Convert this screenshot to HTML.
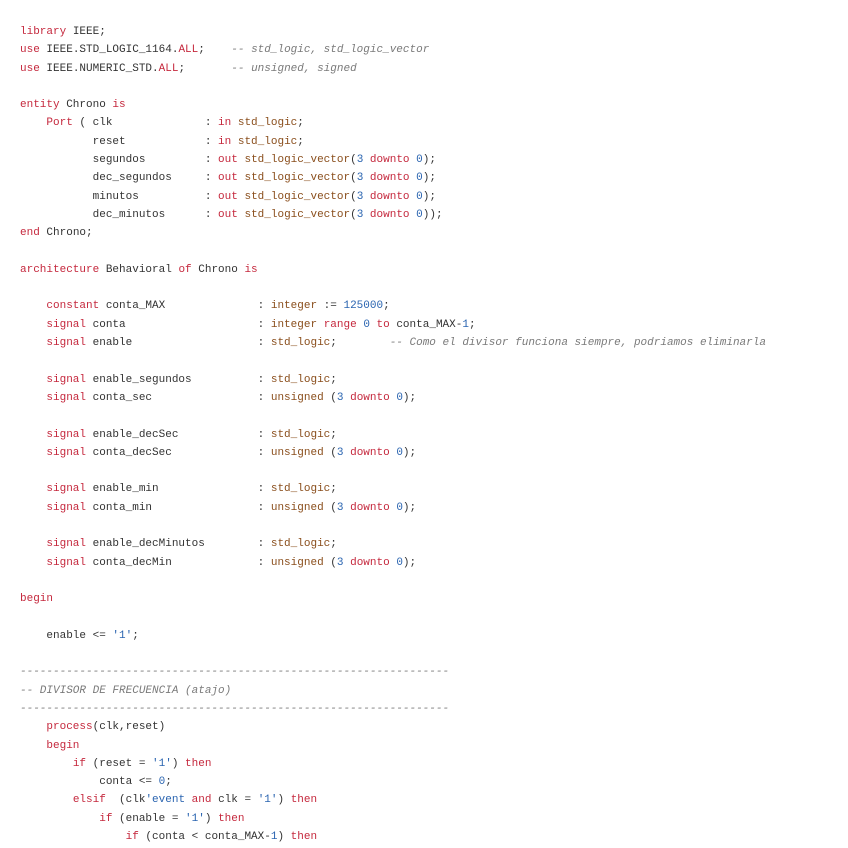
<!DOCTYPE html>
<html><head><meta charset="utf-8"><style>
html,body{margin:0;background:#fff;}
pre{margin:0;padding:23px 0 0 20px;font-family:"Liberation Mono",monospace;font-size:11px;line-height:18.3px;color:#333;}
.k{color:#c5283d}.t{color:#8a4e1c}.n{color:#2a64b0}.c{color:#7a7a7a;font-style:italic}
</style></head><body><pre><span class="k">library</span> IEEE;
<span class="k">use</span> IEEE.STD_LOGIC_1164.<span class="k">ALL</span>;    <span class="c">-- std_logic, std_logic_vector</span>
<span class="k">use</span> IEEE.NUMERIC_STD.<span class="k">ALL</span>;       <span class="c">-- unsigned, signed</span>

<span class="k">entity</span> Chrono <span class="k">is</span>
    <span class="k">Port</span> ( clk              : <span class="k">in</span> <span class="t">std_logic</span>;
           reset            : <span class="k">in</span> <span class="t">std_logic</span>;
           segundos         : <span class="k">out</span> <span class="t">std_logic_vector</span>(<span class="n">3</span> <span class="k">downto</span> <span class="n">0</span>);
           dec_segundos     : <span class="k">out</span> <span class="t">std_logic_vector</span>(<span class="n">3</span> <span class="k">downto</span> <span class="n">0</span>);
           minutos          : <span class="k">out</span> <span class="t">std_logic_vector</span>(<span class="n">3</span> <span class="k">downto</span> <span class="n">0</span>);
           dec_minutos      : <span class="k">out</span> <span class="t">std_logic_vector</span>(<span class="n">3</span> <span class="k">downto</span> <span class="n">0</span>));
<span class="k">end</span> Chrono;

<span class="k">architecture</span> Behavioral <span class="k">of</span> Chrono <span class="k">is</span>

    <span class="k">constant</span> conta_MAX              : <span class="t">integer</span> := <span class="n">125000</span>;
    <span class="k">signal</span> conta                    : <span class="t">integer</span> <span class="k">range</span> <span class="n">0</span> <span class="k">to</span> conta_MAX-<span class="n">1</span>;
    <span class="k">signal</span> enable                   : <span class="t">std_logic</span>;        <span class="c">-- Como el divisor funciona siempre, podriamos eliminarla</span>

    <span class="k">signal</span> enable_segundos          : <span class="t">std_logic</span>;
    <span class="k">signal</span> conta_sec                : <span class="t">unsigned</span> (<span class="n">3</span> <span class="k">downto</span> <span class="n">0</span>);

    <span class="k">signal</span> enable_decSec            : <span class="t">std_logic</span>;
    <span class="k">signal</span> conta_decSec             : <span class="t">unsigned</span> (<span class="n">3</span> <span class="k">downto</span> <span class="n">0</span>);

    <span class="k">signal</span> enable_min               : <span class="t">std_logic</span>;
    <span class="k">signal</span> conta_min                : <span class="t">unsigned</span> (<span class="n">3</span> <span class="k">downto</span> <span class="n">0</span>);

    <span class="k">signal</span> enable_decMinutos        : <span class="t">std_logic</span>;
    <span class="k">signal</span> conta_decMin             : <span class="t">unsigned</span> (<span class="n">3</span> <span class="k">downto</span> <span class="n">0</span>);

<span class="k">begin</span>

    enable &lt;= <span class="n">'1'</span>;

<span class="c">-----------------------------------------------------------------</span>
<span class="c">-- DIVISOR DE FRECUENCIA (atajo)</span>
<span class="c">-----------------------------------------------------------------</span>
    <span class="k">process</span>(clk,reset)
    <span class="k">begin</span>
        <span class="k">if</span> (reset = <span class="n">'1'</span>) <span class="k">then</span>
            conta &lt;= <span class="n">0</span>;
        <span class="k">elsif</span>  (clk<span class="n">'event</span> <span class="k">and</span> clk = <span class="n">'1'</span>) <span class="k">then</span>
            <span class="k">if</span> (enable = <span class="n">'1'</span>) <span class="k">then</span>
                <span class="k">if</span> (conta &lt; conta_MAX-<span class="n">1</span>) <span class="k">then</span>
</pre></body></html>
